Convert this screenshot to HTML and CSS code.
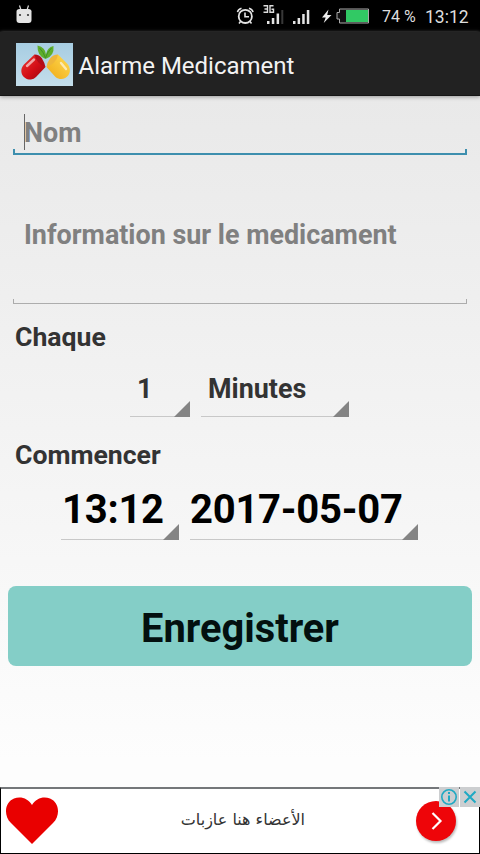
FILE: index.html
```html
<!DOCTYPE html>
<html lang="fr">
<head>
<meta charset="utf-8">
<title>Alarme Medicament</title>
<link rel="stylesheet" href="styles.css">
</head>
<body>
<div class="screen">
  <div class="status">
    <svg class="robot" width="16" height="19" viewBox="0 0 16 19"><path d="M3.500 0.500 5 5M12.500 0.500 11 5" stroke="#ddd" stroke-width="1.200"/><path d="M0.500 6.500Q.5 4 3.500 4h9q3 0 3 2.500V15q0 3-3 3h-9q-3 0-3-3z" fill="#e4e4e4"/><circle cx="4" cy="10" r="1.100" fill="#333"/><circle cx="12" cy="10" r="1.100" fill="#333"/></svg>
    <svg class="indicators" width="134" height="24" viewBox="236 4 134 24">
      <g fill="none" stroke="#e4e4e4" stroke-width="1.800"><circle cx="245.300" cy="16.400" r="6.600"/><path d="M245 12.500v4.300h4M237.500 12.200q.5-3 4-4M253 12.200q-.5-3-4-4" stroke-width="1.600"/><path d="M240.500 21.500l-1.500 2M250 21.500l1.500 2" stroke-width="1.500"/></g>
      <path d="M263.500 5.800h4v6.400h-4M264.500 9h3M273.500 5.800H270v6.400h3.500V9.200h-2" fill="none" stroke="#ddd" stroke-width="1.400"/>
      <path d="M267 21h2.500v3H267zM271.800 18h2.500v6h-2.500zM276.600 13.500h2.500V24h-2.500zM293 21h2.500v3H293zM297.600 18h2.500v6h-2.500zM302.200 14h2.500v10h-2.500zM306.800 10h2.500v14h-2.500z" fill="#e4e4e4"/>
      <path d="M281.300 10h2v14h-2z" fill="#383838"/>
      <path d="M328.500 9.500l-6.500 8h3.700l-2 5.500 7.800-8h-4.300z" fill="#eee"/>
      <path d="M339.500 9h29v14h-29v-4h-2.500v-6.500h2.500z" fill="#111" stroke="#aaa" stroke-width="1"/>
      <path d="M346 10h22v12h-22z" fill="#31c964"/>
    </svg>
    <span class="percent">74 %</span>
    <span class="clock">13:12</span>
  </div>
  <div class="appbar">
    <svg class="logo" width="57" height="43" viewBox="0 0 57 43">
      <defs>
        <linearGradient id="r" x1="0" y1="0" x2="1" y2="1"><stop offset="0" stop-color="#ee3a32"/><stop offset=".55" stop-color="#d20d16"/><stop offset="1" stop-color="#930812"/></linearGradient>
        <linearGradient id="y" x1="0" y1="1" x2="1" y2="0"><stop offset="0" stop-color="#efa915"/><stop offset="1" stop-color="#ffdc54"/></linearGradient>
        <linearGradient id="sky" x1="0" y1="0" x2="0" y2="1"><stop offset="0" stop-color="#a7cde2"/><stop offset="1" stop-color="#c4deeb"/></linearGradient>
      </defs>
      <path d="M0 0h57v43H0z" fill="url(#sky)"/>
      <path d="M18.500 11.500 8 21.500C2 28 7 37 15 36.500q3-.3 5-2.500L29.500 24z" fill="url(#r)"/>
      <path d="M18.500 11.500q5 0 7.500 4t3.500 8.500q-4-1-7-4.500t-4-8" fill="#b30c18"/>
      <path d="M30.500 24l9 10C47 40 57 32 53 23.500q-.5-1.500-2-3L42 11.500z" fill="url(#y)"/>
      <path d="M42 11.500q-5 0-8 4t-3.500 8.500q4-1 7.500-4.500t4-8" fill="#eeb63c"/>
      <path d="M11 23l7-6.500M45 20l5 6" stroke="#fff" stroke-opacity=".6" stroke-width="2.400" stroke-linecap="round"/>
      <path d="M29.500 16Q21 13 21.500 2.500q8 2 8.500 9 1-7 7.500-8.500 1 10-8 13z" fill="#5fae2b"/>
      <path d="M23.500 5q4 4 6 10 1-5 6-10" fill="none" stroke="#3f9128" stroke-width="1"/>
    </svg>
    <span class="title">Alarme Medicament</span>
  </div>
  <main class="form">
    <div class="field name"><i class="caret"></i><span class="hint">Nom</span></div>
    <div class="field info"><span class="hint">Information sur le medicament</span></div>
    <div class="label every">Chaque</div>
    <div class="row interval">
      <div class="spinner count"><span>1</span></div>
      <div class="spinner unit"><span>Minutes</span></div>
    </div>
    <div class="label begin">Commencer</div>
    <div class="row start">
      <div class="spinner time"><span>13:12</span></div>
      <div class="spinner date"><span>2017-05-07</span></div>
    </div>
    <button class="save"><span>Enregistrer</span></button>
  </main>
  <div class="ad">
    <svg class="heart" width="54" height="48" viewBox="0 0 54 48"><path d="M27 47L6 26C-2 18 0 5 9 1.500 16-1 23 1.500 27 8 31 1.500 38-1 45 1.500 54 5 56 18 48 26Z" fill="#e90000"/></svg>
    <span class="adtext" lang="ar" dir="rtl">الأعضاء هنا عازبات</span>
    <svg class="go" width="48" height="48" viewBox="0 0 48 48"><circle cx="24" cy="24" r="20" fill="#ee0509"/><path d="M20.500 16l8 8-8 8" fill="none" stroke="#fff" stroke-width="2.200"/></svg>
    <svg class="choices" width="41" height="20" viewBox="0 0 41 20"><path d="M0 0h20v20H0zM21 0h20v20H21z" fill="#ccced0"/><g fill="none" stroke="#20a9c3" stroke-width="1.600"><circle cx="10" cy="10" r="7.200"/><path d="M10 8.500v6M10 5v2M25.500 4.500l11 11M36.500 4.500l-11 11" stroke-width="2"/></g></svg>
  </div>
</div>
</body>
</html>
```
FILE: styles.css
```css
* { box-sizing: border-box; }
body { margin: 0; font-family: Roboto, sans-serif; }
.screen { width: 480px; height: 854px; display: flex; flex-direction: column; overflow: hidden; background: linear-gradient(#e9e9e9 96px, #fdfdfd 760px); }
.status { height: 32px; flex: none; background: #000; display: flex; align-items: flex-start; color: #dedede; white-space: nowrap; }
.robot { margin: 5px 0 0 16px; }
.indicators { margin: 4px 0 0 204px; }
.percent { width: 33px; margin: 6px 0 0 12px; font-size: 16px; line-height: 22px; }
.clock { margin: 6px 0 0 10px; font-size: 17.5px; line-height: 22px; }
.appbar { height: 64px; flex: none; background: #222; display: flex; align-items: center; color: #f3f3f3; box-shadow: 0 1px 4px #999; border-bottom: 1px solid #161616; }
.logo { margin: 1px 0 0 16px; }
.title { margin: 4px 0 0 5.5px; font-size: 24px; line-height: 30px; }
.form { height: 691px; flex: none; display: flex; flex-direction: column; font-weight: 700; font-size: 26.9px; white-space: nowrap; }
.field { position: relative; width: 454px; margin-left: 13px; border-bottom: 2px solid; display: flex; align-items: center; padding-left: 11px; color: #808080; }
.field::before, .field::after { content: ""; position: absolute; bottom: 0; width: 1px; height: 4px; background: #aaa; }
.field::before { left: 0; }
.field::after { right: 0; }
.name { height: 44px; margin-top: 15px; padding-top: 1px; border-color: #3d8fae; }
.name::before, .name::after { background: #3d8fae; width: 2px; }
.caret { position: absolute; left: 11px; top: 3px; width: 1px; height: 36px; background: #666; }
.info { height: 149px; border-bottom: 1px solid #adadad; }
.info .hint { margin-top: 12px; }
.label { color: #333; margin-left: 15px; line-height: 32px; height: 32px; font-size: 26.6px; }
.every { margin-top: 17px; }
.row { display: flex; }
.interval { margin: 13px 0 0 130px; height: 51px; gap: 11px; color: #333; }
.spinner { position: relative; border-bottom: 1px solid #c8c8c8; height: 51px; }
.spinner::after { content: ""; position: absolute; right: 0; bottom: -1px; width: 16px; height: 16px; background: #848484; clip-path: polygon(100% 0, 100% 100%, 0 100%); }
.count { width: 60px; padding: 7px 0 0 7px; }
.unit { width: 148px; padding: 7px 0 0 7px; }
.begin { margin-top: 22px; }
.start { margin: 14px 0 0 61px; gap: 11px; font-size: 40px; letter-spacing: -.25px; color: #000; }
.start .spinner { height: 55px; line-height: 50px; }
.time { width: 118px; padding-left: 1px; }
.date { width: 228px; }
.save { margin: 46px 8px 0; height: 80px; border: 0; border-radius: 8px; background: #84cec7; color: #03100f; font: 700 39.8px/80px Roboto, sans-serif; padding: 3px 0 0; text-align: center; }
.ad { position: relative; height: 67px; flex: none; background: #fff; border: 1px solid #000; border-top: 2px solid #74777a; display: flex; align-items: center; }
.heart { margin-left: 4px; }
.adtext { margin-left: 120px; width: 126px; font-family: "DejaVu Sans", sans-serif; font-size: 16px; line-height: 24px; color: #333; white-space: nowrap; position: relative; top: -1px; }
.go { margin-left: 107px; filter: drop-shadow(1px 2px 1px #bbb); }
.choices { position: absolute; right: -1px; top: -2px; }
```
